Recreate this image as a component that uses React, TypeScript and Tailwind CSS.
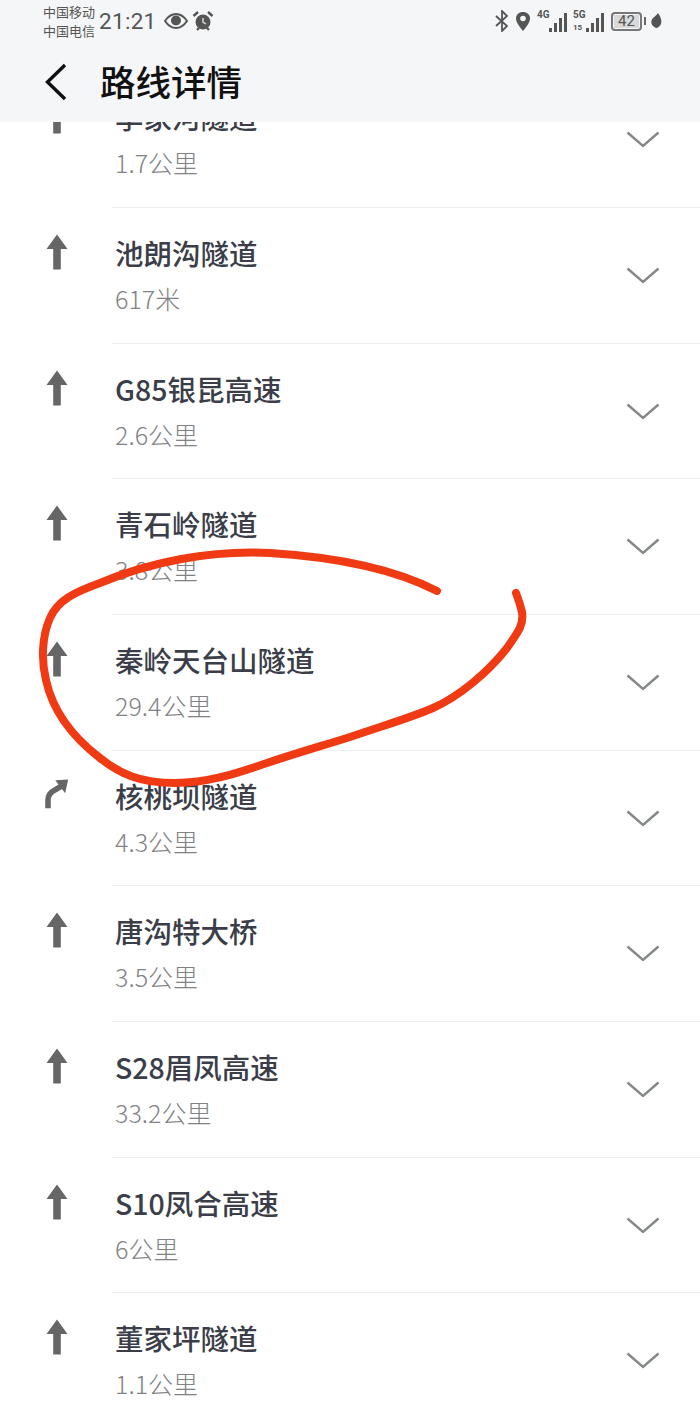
const routes = [
  { name: "李家河隧道", dist: "1.7公里", turn: false },
  { name: "池朗沟隧道", dist: "617米", turn: false },
  { name: "G85银昆高速", dist: "2.6公里", turn: false },
  { name: "青石岭隧道", dist: "3.8公里", turn: false },
  { name: "秦岭天台山隧道", dist: "29.4公里", turn: false },
  { name: "核桃坝隧道", dist: "4.3公里", turn: true },
  { name: "唐沟特大桥", dist: "3.5公里", turn: false },
  { name: "S28眉凤高速", dist: "33.2公里", turn: false },
  { name: "S10凤合高速", dist: "6公里", turn: false },
  { name: "董家坪隧道", dist: "1.1公里", turn: false },
];

function UpArrow() {
  return (
    <svg width="22" height="36" viewBox="0 0 22 36" className="text-[#666666]">
      <path d="M11 0.5 L21.5 15 L14.8 15 L14.8 35.5 L7.2 35.5 L7.2 15 L0.5 15 Z" fill="currentColor" />
    </svg>
  );
}

function TurnArrow() {
  return (
    <svg width="28" height="34" viewBox="0 0 28 34" className="text-[#666666]">
      <path d="M3.5 33.5 L3.5 24 C3.5 18 7 14.5 12 12 L19 8" fill="none" stroke="currentColor" strokeWidth="6.5" />
      <path d="M12 1 L27 0 L23.5 16 Z" fill="currentColor" />
    </svg>
  );
}

function Chevron() {
  return (
    <svg width="34" height="18" viewBox="0 0 34 18" fill="none" stroke="#858888" strokeWidth="2.4">
      <path d="M1.5 1.5 L17 15 L32.5 1.5" />
    </svg>
  );
}

function Bars({ heights }: { heights: number[] }) {
  return (
    <div className="flex items-end gap-[2px] h-[20px]">
      {heights.map((h, i) => (
        <div key={i} className="w-[3px] bg-[#555555]" style={{ height: h }} />
      ))}
    </div>
  );
}

function StatusBar() {
  return (
    <div className="flex items-center h-[42px] pl-[43px] pr-[38px] text-[#555555]">
      <div className="w-[56px] text-[13px] leading-[19px] font-['Noto_Sans_CJK_SC',sans-serif]">
        <div>中国移动</div>
        <div>中国电信</div>
      </div>
      <span className="text-[22.5px] leading-none font-['Roboto',sans-serif] tracking-[0.3px]">21:21</span>
      <svg width="24" height="16" viewBox="0 0 24 16" className="ml-[7px]">
        <path d="M1 8 C5 2 9 1 12 1 C15 1 19 2 23 8 C19 14 15 15 12 15 C9 15 5 14 1 8 Z" fill="none" stroke="#555555" strokeWidth="2" />
        <circle cx="12" cy="7.5" r="5" fill="#555555" />
      </svg>
      <svg width="22" height="22" viewBox="0 0 22 22" className="ml-[4px]">
        <circle cx="11" cy="12" r="7.5" fill="#555555" />
        <path d="M1.5 6 L6 2 M20.5 6 L16 2 M5 20 L7 18 M17 20 L15 18" stroke="#555555" strokeWidth="2.4" />
        <path d="M11 8 L11 12 L14 14" stroke="#d8d8d8" strokeWidth="1.5" fill="none" />
      </svg>
      <div className="flex-1" />
      <svg width="16" height="22" viewBox="0 0 16 22" fill="none" stroke="#555555" strokeWidth="1.8">
        <path d="M2 6 L13 16 L8 21 L8 1 L13 6 L2 16" />
      </svg>
      <svg width="16" height="20" viewBox="0 0 16 20" className="ml-[5px]">
        <path d="M8 20 C4 15 1 11 1 7.5 C1 3.5 4 1 8 1 C12 1 15 3.5 15 7.5 C15 11 12 15 8 20 Z" fill="#555555" />
        <circle cx="8" cy="7.5" r="2.8" fill="#f5f6f8" />
      </svg>
      <div className="relative ml-[6px] w-[30px] h-[22px]">
        <span className="absolute left-0 top-0 text-[10px] leading-[10px] font-bold font-['Roboto',sans-serif]">4G</span>
        <div className="absolute right-0 bottom-0">
          <Bars heights={[4, 9, 14, 19]} />
        </div>
      </div>
      <div className="relative ml-[6px] w-[31px] h-[22px]">
        <span className="absolute left-0 top-0 text-[10px] leading-[10px] font-bold font-['Roboto',sans-serif]">5G</span>
        <span className="absolute left-0 bottom-0 text-[8px] leading-[9px] font-bold font-['Roboto',sans-serif]">15</span>
        <div className="absolute right-0 bottom-0">
          <Bars heights={[4, 9, 14, 19]} />
        </div>
      </div>
      <div className="ml-[7px] flex items-center">
        <div className="w-[31px] h-[19px] rounded-[4px] border-2 border-[#777777] p-[1px] flex">
          <div className="w-full bg-[#d9d9d9] flex items-center justify-center text-[15px] leading-none font-['Roboto',sans-serif]">42</div>
        </div>
        <div className="ml-[2px] w-[2px] h-[8px] bg-[#666666]" />
      </div>
      <svg width="12" height="17" viewBox="0 0 12 17" className="ml-[4px]">
        <path d="M6 15 C1 13 0 8 3 5 C5 3 7 2 8 0 C11 4 12 8 11 11 C10 13 8 15 6 15 Z M5 17 L5 9" fill="#555555" />
      </svg>
    </div>
  );
}

export default function App() {
  return (
    <div className="relative w-[700px] h-[1428px] overflow-hidden bg-white font-['Noto_Sans_CJK_SC','Noto_Sans',sans-serif]">
      {/* Header */}
      <div className="absolute left-0 top-0 z-10 w-full h-[122px] bg-[#f5f6f8]">
        <StatusBar />
        <div className="flex items-center h-[80px] pl-[44px]">
          <svg width="24" height="38" viewBox="0 0 24 38" fill="none" stroke="#111111" strokeWidth="3.4">
            <path d="M21 2 L3.5 19 L21 36" />
          </svg>
          <h1 className="ml-[32px] mb-[3px] text-[35.5px] leading-none font-medium text-[#111111]">路线详情</h1>
        </div>
      </div>

      {/* Route steps */}
      <div className="pt-[72.3px]">
        {routes.map((r) => (
          <div key={r.name} className="flex h-[135.7px]">
            <div className="w-[112px] shrink-0 flex justify-center">
              <div className="w-[24px] pt-[26px] flex justify-center ml-[1px]">{r.turn ? <TurnArrow /> : <UpArrow />}</div>
            </div>
            <div className="flex-1 border-b border-[#efefef] flex">
              <div className="flex-1 pl-[3px] pt-[24px]">
                <div className="text-[28.5px] leading-[42px] text-[#3b3e48] font-medium whitespace-nowrap">{r.name}</div>
                <div className="mt-[6px] text-[25px] leading-[36px] text-[#808285] font-light whitespace-nowrap">{r.dist}</div>
              </div>
              <div className="w-[74px] shrink-0 pt-[59px]">
                <Chevron />
              </div>
            </div>
          </div>
        ))}
      </div>

      {/* Hand-drawn red circle */}
      <svg width="700" height="1428" viewBox="0 0 700 1428" fill="none" className="absolute left-0 top-0 z-20 pointer-events-none">
        <path
          d="M437 591 C400 572 350 558 270 553 C210 550 150 562 100 583 C75 592 58 600 50 618 C42 636 41 660 46 680 C52 708 70 735 100 758 C120 774 140 783 175 783 C210 783 240 772 267 763 C300 752 325 745 350 737 C385 725 410 718 433 708 C460 696 488 672 507 648 C518 632 524 625 522 612 C520 604 518 598 516 593"
          stroke="#f03a14"
          strokeWidth="8"
          strokeLinecap="round"
          strokeLinejoin="round"
        />
      </svg>
    </div>
  );
}
